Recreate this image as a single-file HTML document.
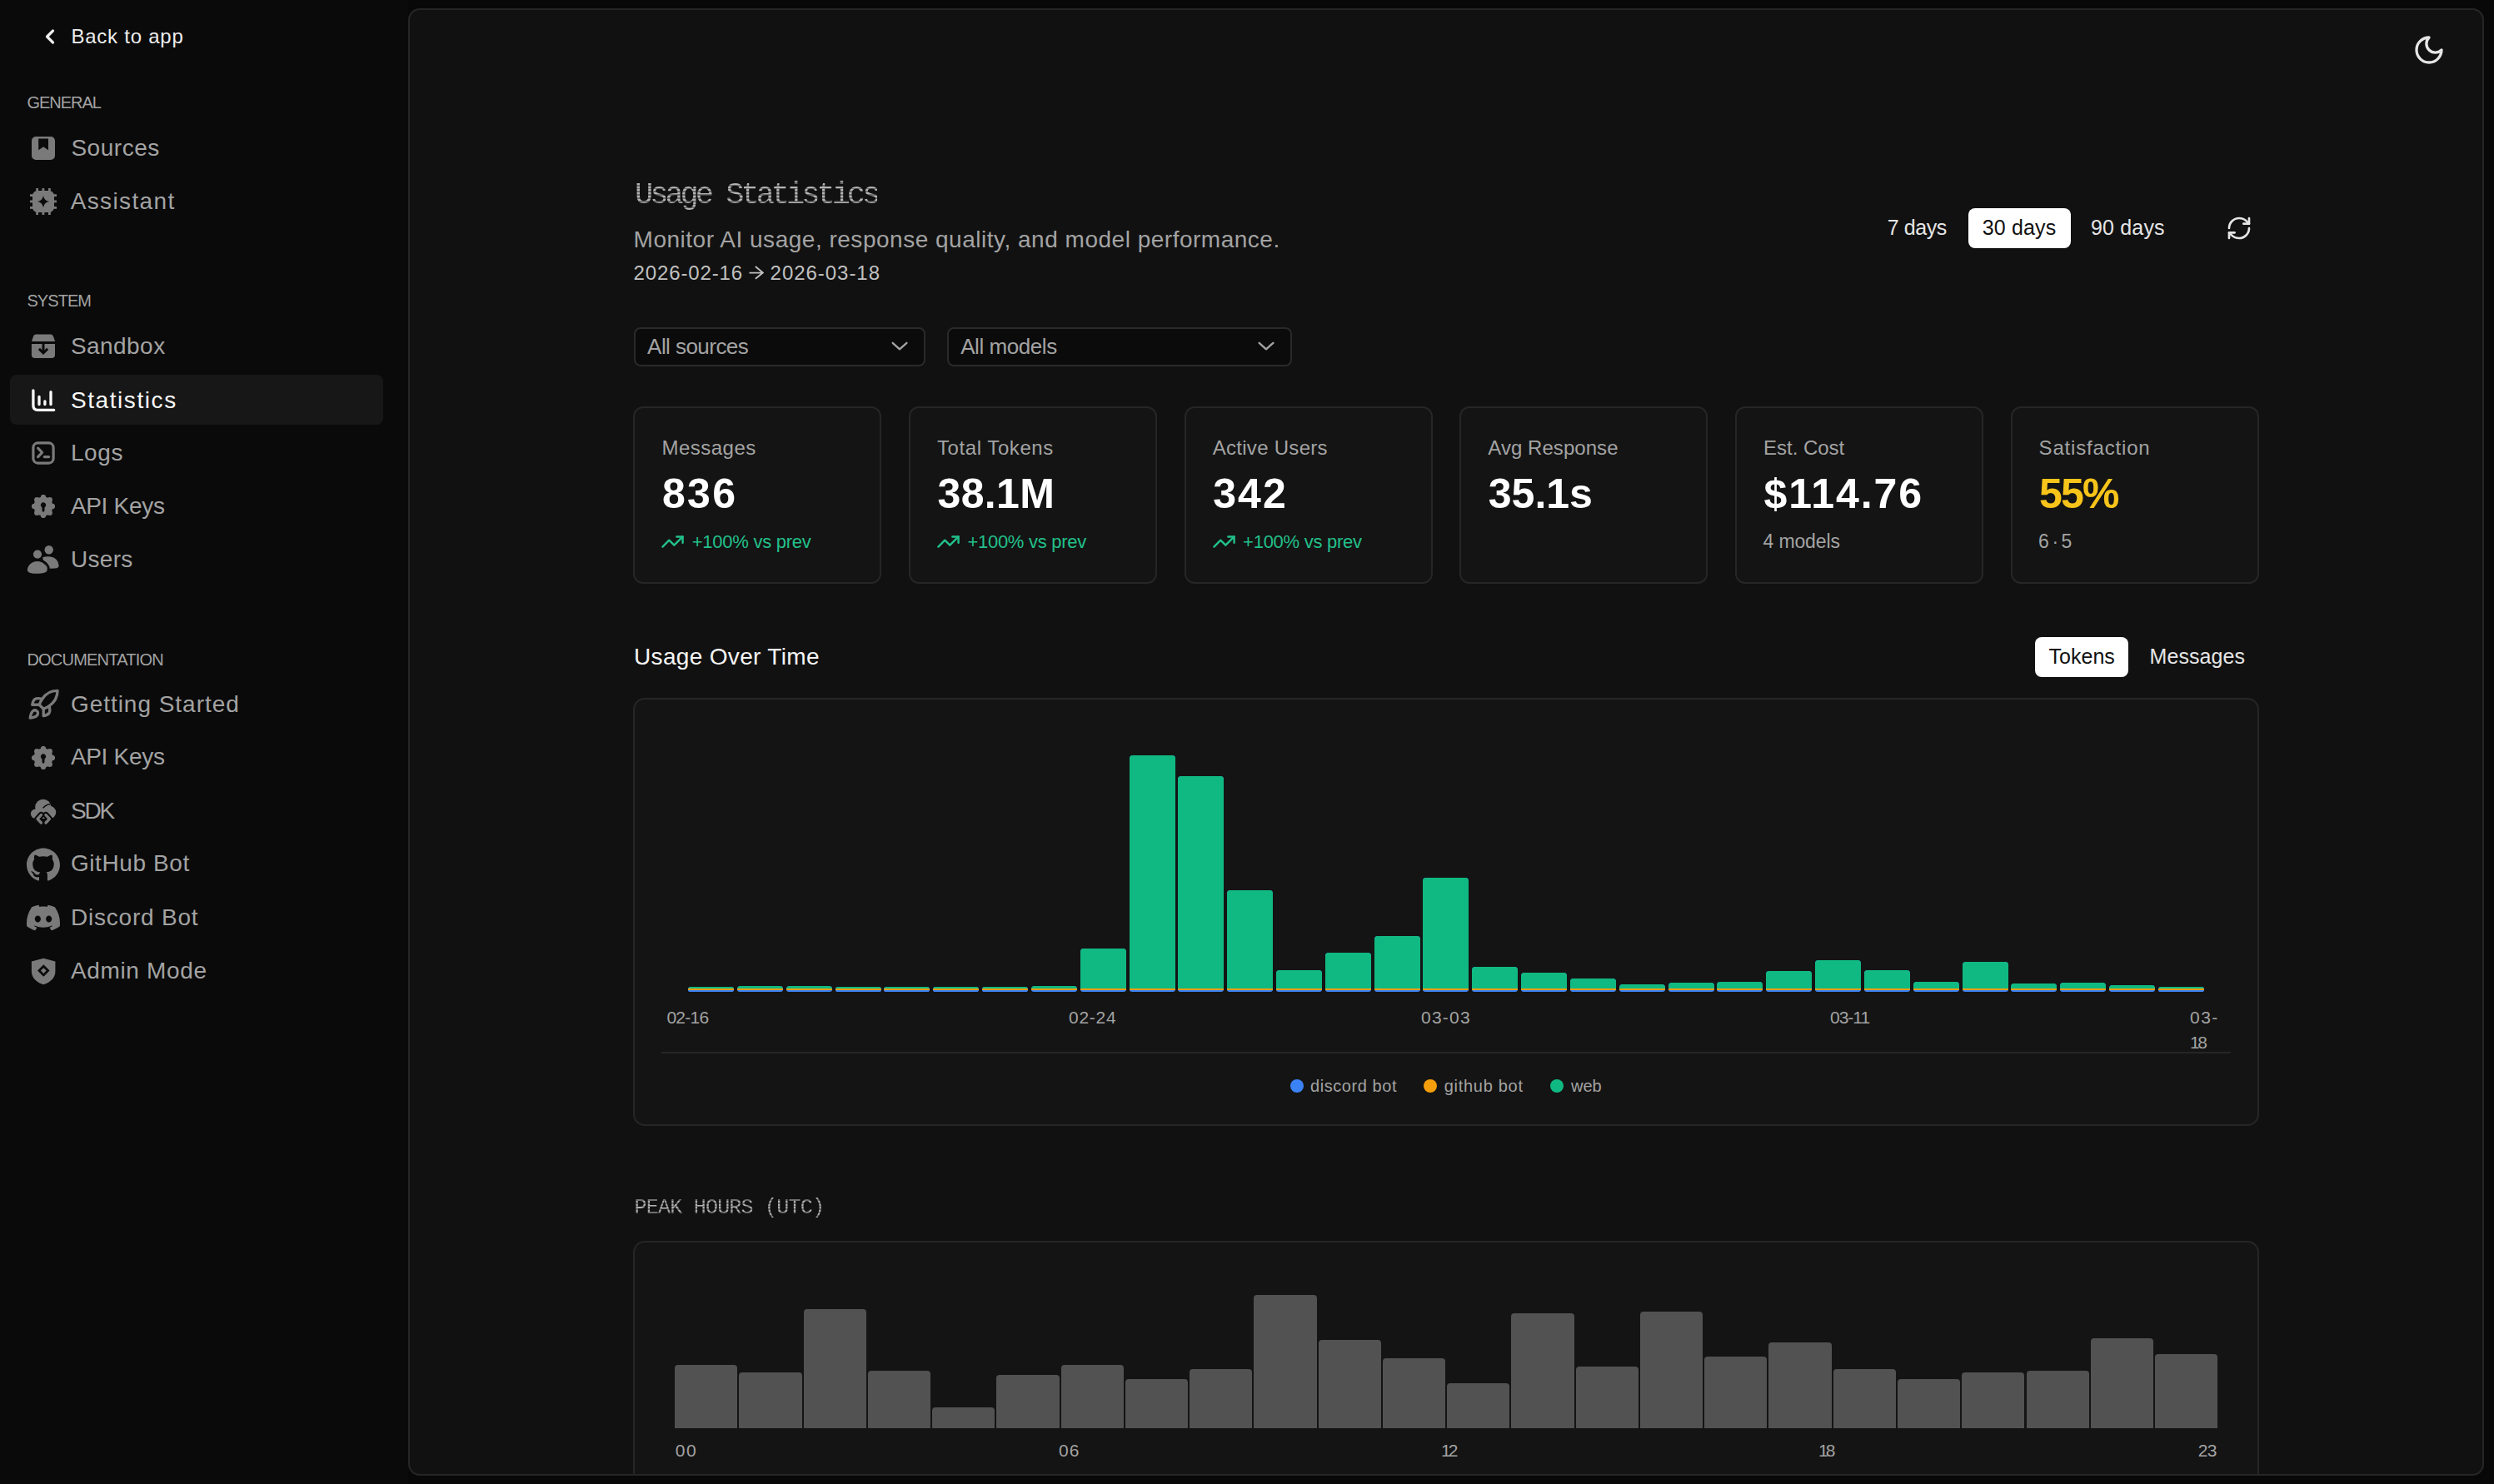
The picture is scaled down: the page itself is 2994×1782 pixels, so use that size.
<!DOCTYPE html>
<html><head><meta charset="utf-8"><title>Usage Statistics</title>
<style>
html,body{margin:0;padding:0;width:2994px;height:1782px;overflow:hidden;background:#080808;}
.t{position:absolute;white-space:nowrap;}
.r{position:absolute;}
#root{position:relative;width:2994px;height:1782px;overflow:hidden;}
@media (max-width: 1700px) { html,body{width:1497px;height:891px;} #root{transform:scale(0.5);transform-origin:0 0;} }
</style></head><body><div id="root">
<div class="r" style="left:0px;top:0px;width:490px;height:1782px;background:#0a0a0a"></div>
<svg class="r" style="left:46px;top:30px" width="28" height="28" viewBox="0 0 28 28"><path d="M17.5 21 L10.5 14 L17.5 7" fill="none" stroke="#ededed" stroke-width="3.2" stroke-linecap="round" stroke-linejoin="round"/></svg>
<div class="t" style="left:85.4px;top:32px;font-size:24px;line-height:24px;color:#ededed;font-weight:400;letter-spacing:0.76px;font-family:'Liberation Sans', sans-serif;">Back to app</div>
<div class="t" style="left:32.4px;top:113px;font-size:20px;line-height:20px;color:#a3a3a3;font-weight:400;letter-spacing:-1.00px;font-family:'Liberation Sans', sans-serif;">GENERAL</div>
<svg class="r" style="left:38px;top:164px" width="28" height="28" viewBox="0 0 28 28"><path fill-rule="evenodd" fill="#7a7a7a" d="M5 0 H23 A5 5 0 0 1 28 5 V23 A5 5 0 0 1 23 28 H5 A5 5 0 0 1 0 23 V5 A5 5 0 0 1 5 0 Z M8.2 2.5 V16.3 L14.1 12.2 L20 16.3 V2.5 Z"/></svg>
<div class="t" style="left:85.4px;top:164px;font-size:28px;line-height:28px;color:#a3a3a3;font-weight:400;letter-spacing:0.53px;font-family:'Liberation Sans', sans-serif;">Sources</div>
<svg class="r" style="left:36px;top:226px" width="32" height="32" viewBox="0 0 32 32"><rect x="7.199999999999999" y="0" width="2.8" height="4" fill="#7a7a7a"/><rect x="7.199999999999999" y="28" width="2.8" height="4" fill="#7a7a7a"/><rect x="0" y="7.199999999999999" width="4" height="2.8" fill="#7a7a7a"/><rect x="28" y="7.199999999999999" width="4" height="2.8" fill="#7a7a7a"/><rect x="14.5" y="0" width="2.8" height="4" fill="#7a7a7a"/><rect x="14.5" y="28" width="2.8" height="4" fill="#7a7a7a"/><rect x="0" y="14.5" width="4" height="2.8" fill="#7a7a7a"/><rect x="28" y="14.5" width="4" height="2.8" fill="#7a7a7a"/><rect x="22.0" y="0" width="2.8" height="4" fill="#7a7a7a"/><rect x="22.0" y="28" width="2.8" height="4" fill="#7a7a7a"/><rect x="0" y="22.0" width="4" height="2.8" fill="#7a7a7a"/><rect x="28" y="22.0" width="4" height="2.8" fill="#7a7a7a"/><path fill-rule="evenodd" fill="#7a7a7a" d="M9 3 H23 A6 6 0 0 1 29 9 V23 A6 6 0 0 1 23 29 H9 A6 6 0 0 1 3 23 V9 A6 6 0 0 1 9 3 Z M16 8.9 Q17.1 14.9 23.1 16 Q17.1 17.1 16 23.1 Q14.9 17.1 8.9 16 Q14.9 14.9 16 8.9 Z"/></svg>
<div class="t" style="left:84.7px;top:228px;font-size:28px;line-height:28px;color:#a3a3a3;font-weight:400;letter-spacing:1.36px;font-family:'Liberation Sans', sans-serif;">Assistant</div>
<div class="t" style="left:32.4px;top:351px;font-size:20px;line-height:20px;color:#a3a3a3;font-weight:400;letter-spacing:-0.92px;font-family:'Liberation Sans', sans-serif;">SYSTEM</div>
<svg class="r" style="left:37px;top:401px" width="30" height="30" viewBox="0 0 30 30"><path fill="#7a7a7a" d="M6.2 0.6 H23.8 Q26 0.6 27 3 L29.2 8.9 H1 L3 3 Q4 0.6 6.2 0.6 Z"/><path fill="#7a7a7a" d="M0.9 12 H29 V25 A4 4 0 0 1 25 29 H4.9 A4 4 0 0 1 0.9 25 Z"/><path d="M15 12 V22.5 M9.9 17.9 L15 23 L20.1 17.9" fill="none" stroke="#0a0a0a" stroke-width="2.9" stroke-linecap="butt" stroke-linejoin="miter"/></svg>
<div class="t" style="left:84.9px;top:402px;font-size:28px;line-height:28px;color:#a3a3a3;font-weight:400;letter-spacing:0.45px;font-family:'Liberation Sans', sans-serif;">Sandbox</div>
<div class="r" style="left:12px;top:450px;width:448px;height:60px;background:#171717;border-radius:8px"></div>
<svg class="r" style="left:37.8px;top:465.8px" width="29" height="29" viewBox="0 0 29 29"><g fill="none" stroke="#fafafa" stroke-width="3.3" stroke-linecap="round" stroke-linejoin="round"><path d="M1.9 2.9 V21 Q1.9 26.3 7.2 26.3 H26.7"/><path d="M9 10.5 V19.6"/><path d="M15.9 15.8 V19.6"/><path d="M23 4.7 V19.6"/></g></svg>
<div class="t" style="left:84.9px;top:466.5px;font-size:28px;line-height:28px;color:#fafafa;font-weight:400;letter-spacing:1.58px;font-family:'Liberation Sans', sans-serif;">Statistics</div>
<svg class="r" style="left:38px;top:530px" width="28" height="28" viewBox="0 0 28 28"><g fill="none" stroke="#7a7a7a" stroke-width="3.2" stroke-linecap="round" stroke-linejoin="round"><rect x="1.9" y="1.9" width="24.2" height="24.2" rx="5.5"/><path d="M7.6 8.2 L12.6 13.4 L7.6 18.6"/><path d="M15.3 18.6 H20.6"/></g></svg>
<div class="t" style="left:84.9px;top:530px;font-size:28px;line-height:28px;color:#a3a3a3;font-weight:400;letter-spacing:0.60px;font-family:'Liberation Sans', sans-serif;">Logs</div>
<svg class="r" style="left:38px;top:594px" width="28" height="28" viewBox="0 0 28 28"><g fill="#7a7a7a"><circle cx="14" cy="14" r="11.5"/><circle cx="14.00" cy="3.10" r="3.2"/><circle cx="21.71" cy="6.29" r="3.2"/><circle cx="24.90" cy="14.00" r="3.2"/><circle cx="21.71" cy="21.71" r="3.2"/><circle cx="14.00" cy="24.90" r="3.2"/><circle cx="6.29" cy="21.71" r="3.2"/><circle cx="3.10" cy="14.00" r="3.2"/><circle cx="6.29" cy="6.29" r="3.2"/></g><path fill="#0a0a0a" d="M12.4 15.3 A3.2 3.2 0 1 1 15.6 15.3 L15.4 19.3 A1.4 1.4 0 0 1 12.6 19.3 Z"/></svg>
<div class="t" style="left:84.9px;top:594px;font-size:28px;line-height:28px;color:#a3a3a3;font-weight:400;letter-spacing:-0.31px;font-family:'Liberation Sans', sans-serif;">API Keys</div>
<svg class="r" style="left:32px;top:654px" width="40" height="36" viewBox="0 0 40 36"><g fill="#7a7a7a"><circle cx="26.7" cy="6.3" r="5.2"/><circle cx="13" cy="11.6" r="5.1"/><path d="M19.5 15 Q24 13.8 29 14.5 Q37.8 16.3 38.6 25 Q38.8 28.4 34 28.6 L23.5 29 Q23 22 19.5 18 Z"/><path d="M12.8 20.1 C20 20.1 24.6 25.8 24.6 30.2 C24.6 33.6 19 34.8 12.8 34.8 C6.6 34.8 0.9 33.8 0.9 30.4 C0.9 25.8 5.6 20.1 12.8 20.1 Z"/></g><path d="M12.8 18.2 C21 18.2 26.6 24.8 26.6 30.2" fill="none" stroke="#0a0a0a" stroke-width="2.6"/></svg>
<div class="t" style="left:84.9px;top:657.5px;font-size:28px;line-height:28px;color:#a3a3a3;font-weight:400;letter-spacing:0.32px;font-family:'Liberation Sans', sans-serif;">Users</div>
<div class="t" style="left:32.4px;top:781.5px;font-size:20px;line-height:20px;color:#a3a3a3;font-weight:400;letter-spacing:-0.78px;font-family:'Liberation Sans', sans-serif;">DOCUMENTATION</div>
<svg class="r" style="left:31.8px;top:825.8px" width="40.4" height="40.4" viewBox="0 0 24 24"><g fill="none" stroke="#7a7a7a" stroke-width="2" stroke-linecap="round" stroke-linejoin="round"><path d="M4.5 16.5c-1.5 1.26-2 5-2 5s3.74-.5 5-2c.71-.84.7-2.13-.09-2.91a2.18 2.18 0 0 0-2.91-.09z"/><path d="m12 15-3-3a22 22 0 0 1 2-3.95A12.88 12.88 0 0 1 22 2c0 2.72-.78 7.5-6 11a22.350 22.35 0 0 1-4 2z"/><path d="M9 12H4s.55-3.03 2-4c1.62-1.080 5 0 5 0"/><path d="M12 15v5s3.03-.55 4-2c1.08-1.62 0-5 0-5"/></g></svg>
<div class="t" style="left:84.9px;top:831.6px;font-size:28px;line-height:28px;color:#a3a3a3;font-weight:400;letter-spacing:0.97px;font-family:'Liberation Sans', sans-serif;">Getting Started</div>
<svg class="r" style="left:38px;top:896px" width="28" height="28" viewBox="0 0 28 28"><g fill="#7a7a7a"><circle cx="14" cy="14" r="11.5"/><circle cx="14.00" cy="3.10" r="3.2"/><circle cx="21.71" cy="6.29" r="3.2"/><circle cx="24.90" cy="14.00" r="3.2"/><circle cx="21.71" cy="21.71" r="3.2"/><circle cx="14.00" cy="24.90" r="3.2"/><circle cx="6.29" cy="21.71" r="3.2"/><circle cx="3.10" cy="14.00" r="3.2"/><circle cx="6.29" cy="6.29" r="3.2"/></g><path fill="#0a0a0a" d="M12.4 15.3 A3.2 3.2 0 1 1 15.6 15.3 L15.4 19.3 A1.4 1.4 0 0 1 12.6 19.3 Z"/></svg>
<div class="t" style="left:84.9px;top:895.3px;font-size:28px;line-height:28px;color:#a3a3a3;font-weight:400;letter-spacing:-0.31px;font-family:'Liberation Sans', sans-serif;">API Keys</div>
<svg class="r" style="left:34px;top:955px" width="36" height="38" viewBox="0 0 36 38"><defs><mask id="sdkm" maskUnits="userSpaceOnUse" x="0" y="0" width="36" height="38"><rect width="36" height="38" fill="#000"/><g fill="#fff"><circle cx="8.6" cy="22.2" r="5.7"/><circle cx="17.8" cy="14.4" r="9.6"/><circle cx="25.4" cy="20.6" r="7.8"/><rect x="8.6" y="16" width="17" height="12"/></g><path d="M17.6 15.4 Q21.5 10.6 26.8 10.4" fill="none" stroke="#000" stroke-width="1.5"/><path d="M49.4 0" /><path d="M15.4 23.6 L11 28.4 L15.4 33 M21 23.6 L25.4 28.4 L21 33" fill="none" stroke="#000" stroke-width="7.4" stroke-linecap="round" stroke-linejoin="round"/></mask></defs><rect width="36" height="38" fill="#7a7a7a" mask="url(#sdkm)"/><path d="M15.4 23.6 L11 28.4 L15.4 33 M21 23.6 L25.4 28.4 L21 33" fill="none" stroke="#7a7a7a" stroke-width="3.4" stroke-linecap="round" stroke-linejoin="round"/></svg>
<div class="t" style="left:84.9px;top:959.6px;font-size:28px;line-height:28px;color:#a3a3a3;font-weight:400;letter-spacing:-2.15px;font-family:'Liberation Sans', sans-serif;">SDK</div>
<svg class="r" style="left:32px;top:1018px" width="40" height="40" viewBox="0 0 24 24"><path fill="#7a7a7a" d="M12 .297c-6.63 0-12 5.373-12 12 0 5.303 3.438 9.8 8.205 11.385.6.113.82-.258.82-.577 0-.285-.01-1.04-.015-2.04-3.338.724-4.042-1.61-4.042-1.61C4.422 18.07 3.633 17.7 3.633 17.7c-1.087-.744.084-.729.084-.729 1.205.084 1.838 1.236 1.838 1.236 1.07 1.835 2.809 1.305 3.495.998.108-.776.417-1.305.76-1.605-2.665-.3-5.466-1.332-5.466-5.930 0-1.31.465-2.38 1.235-3.22-.135-.303-.54-1.523.105-3.176 0 0 1.005-.322 3.3 1.23.96-.267 1.98-.399 3-.405 1.02.006 2.04.138 3 .405 2.28-1.552 3.285-1.23 3.285-1.23.645 1.653.24 2.873.12 3.176.765.84 1.23 1.91 1.23 3.22 0 4.61-2.805 5.625-5.475 5.92.42.36.81 1.096.81 2.22 0 1.606-.015 2.896-.015 3.286 0 .315.21.69.825.57C20.565 22.092 24 17.592 24 12.297c0-6.627-5.373-12-12-12"/></svg>
<div class="t" style="left:84.9px;top:1023px;font-size:28px;line-height:28px;color:#a3a3a3;font-weight:400;letter-spacing:0.61px;font-family:'Liberation Sans', sans-serif;">GitHub Bot</div>
<svg class="r" style="left:32px;top:1082px" width="40" height="40" viewBox="0 0 24 24"><path fill="#7a7a7a" d="M20.317 4.3698a19.7913 19.7913 0 00-4.8851-1.5152.0741.0741 0 00-.0785.0371c-.211.3753-.4447.8648-.6083 1.2495-1.8447-.2762-3.68-.2762-5.4868 0-.1636-.3933-.4058-.8742-.6177-1.2495a.077.077 0 00-.0785-.037 19.7363 19.7363 0 00-4.8852 1.515.0699.0699 0 00-.0321.0277C.5334 9.0458-.319 13.5799.0992 18.0578a.0824.0824 0 00.0312.0561c2.0528 1.5076 4.0413 2.4228 5.9929 3.0294a.0777.0777 0 00.0842-.0276c.4616-.6304.8731-1.2952 1.226-1.9942a.076.076 0 00-.0416-.1057c-.6528-.2476-1.2743-.5495-1.8722-.8923a.077.077 0 01-.0076-.1277c.1258-.0943.2517-.1923.3718-.2914a.0743.0743 0 01.0776-.0105c3.9278 1.7933 8.18 1.7933 12.0614 0a.0739.0739 0 01.0785.0095c.1202.099.246.1981.3728.2924a.077.077 0 01-.0066.1276 12.2986 12.2986 0 01-1.873.8914.0766.0766 0 00-.0407.1067c.3604.698.7719 1.3628 1.225 1.9932a.076.076 0 00.0842.0286c1.961-.6067 3.9495-1.5219 6.0023-3.0294a.077.077 0 00.0313-.0552c.5004-5.177-.8382-9.6739-3.5485-13.6604a.061.061 0 00-.0312-.0286zM8.02 15.3312c-1.1825 0-2.1569-1.0857-2.1569-2.419 0-1.3332.9555-2.4189 2.157-2.4189 1.2108 0 2.1757 1.0952 2.1568 2.419 0 1.3332-.9555 2.4189-2.1569 2.4189zm7.9748 0c-1.1825 0-2.1569-1.0857-2.1569-2.419 0-1.3332.9554-2.4189 2.1569-2.4189 1.2108 0 2.1757 1.0952 2.1568 2.419 0 1.3332-.946 2.4189-2.1568 2.4189Z"/></svg>
<div class="t" style="left:84.9px;top:1087.8px;font-size:28px;line-height:28px;color:#a3a3a3;font-weight:400;letter-spacing:0.80px;font-family:'Liberation Sans', sans-serif;">Discord Bot</div>
<svg class="r" style="left:37px;top:1150px" width="30" height="33" viewBox="0 0 30 33"><path fill-rule="evenodd" fill="#7a7a7a" d="M15.2 0.8 L29.4 4.6 V16.5 C29.4 24.5 23 30 15.2 32.2 C7.4 30 0.9 24.5 0.9 16.5 V4.6 Z M15.3 8.2 L22.6 15.5 L15.3 22.8 L8 15.5 Z M15.3 12.2 L11.9 15.5 L15.3 18.9 L18.7 15.5 Z"/></svg>
<div class="t" style="left:84.9px;top:1151.5px;font-size:28px;line-height:28px;color:#a3a3a3;font-weight:400;letter-spacing:0.67px;font-family:'Liberation Sans', sans-serif;">Admin Mode</div>
<div class="r" style="left:490px;top:10px;width:2492px;height:1762px;background:#111111;border-radius:14px"></div>
<svg class="r" style="left:2896px;top:40px" width="40" height="40" viewBox="0 0 24 24"><path d="M12 3a6 6 0 0 0 9 9 9 9 0 1 1-9-9Z" fill="none" stroke="#e5e5e5" stroke-width="2" stroke-linecap="round" stroke-linejoin="round"/></svg>
<div class="t" style="left:762.0px;top:216px;font-size:37px;line-height:37px;color:transparent;font-weight:400;letter-spacing:-4.00px;font-family:'Liberation Mono', monospace;background:repeating-linear-gradient(to bottom,#b4b4b4 0px,#b4b4b4 2px,#6e6e6e 2px,#6e6e6e 3.8px);-webkit-background-clip:text;background-clip:text;">Usage Statistics</div>
<div class="t" style="left:760.6px;top:274.3px;font-size:28px;line-height:28px;color:#a3a3a3;font-weight:400;letter-spacing:0.51px;font-family:'Liberation Sans', sans-serif;">Monitor AI usage, response quality, and model performance.</div>
<div class="t" style="left:760.6px;top:316px;font-size:24px;line-height:24px;color:#c0c0c0;font-weight:400;letter-spacing:0.86px;font-family:'Liberation Sans', sans-serif;">2026-02-16</div>
<svg class="r" style="left:896px;top:316px" width="24" height="24" viewBox="0 0 24 24"><path d="M3.5 11.6 H19.8 M10.9 4.1 L19.8 11.6 L10.9 18.8" fill="none" stroke="#c0c0c0" stroke-width="1.9" stroke-linecap="butt" stroke-linejoin="miter"/></svg>
<div class="t" style="left:924.6px;top:316px;font-size:24px;line-height:24px;color:#c0c0c0;font-weight:400;letter-spacing:0.96px;font-family:'Liberation Sans', sans-serif;">2026-03-18</div>
<div class="t" style="left:2265.7px;top:260.7px;font-size:25px;line-height:25px;color:#e5e5e5;font-weight:400;letter-spacing:-0.40px;font-family:'Liberation Sans', sans-serif;">7 days</div>
<div class="r" style="left:2363px;top:250px;width:123px;height:48px;background:#ffffff;border-radius:8px"></div>
<div class="t" style="left:2379.7px;top:260.7px;font-size:25px;line-height:25px;color:#111111;font-weight:400;letter-spacing:0.15px;font-family:'Liberation Sans', sans-serif;">30 days</div>
<div class="t" style="left:2510.0px;top:260.7px;font-size:25px;line-height:25px;color:#e5e5e5;font-weight:400;letter-spacing:0.17px;font-family:'Liberation Sans', sans-serif;">90 days</div>
<svg class="r" style="left:2672px;top:258px" width="32" height="32" viewBox="0 0 24 24"><g fill="none" stroke="#e5e5e5" stroke-width="2" stroke-linecap="round" stroke-linejoin="round"><path d="M3 12a9 9 0 0 1 9-9 9.75 9.75 0 0 1 6.74 2.74L21 8"/><path d="M21 3v5h-5"/><path d="M21 12a9 9 0 0 1-9 9 9.75 9.75 0 0 1-6.74-2.74L3 16"/><path d="M8 16H3v5"/></g></svg>
<div class="r" style="left:760.6px;top:393px;width:350.80000000000007px;height:47px;background:#0b0b0b;border:2px solid #2a2a2a;border-radius:8px;box-sizing:border-box"></div>
<div class="t" style="left:777.1px;top:403.4px;font-size:26px;line-height:26px;color:#a3a3a3;font-weight:400;letter-spacing:-0.55px;font-family:'Liberation Sans', sans-serif;">All sources</div>
<svg class="r" style="left:1068px;top:404px" width="24" height="24" viewBox="0 0 24 24"><path d="M3.7 7.8 L12 15.3 L20.4 7.8" fill="none" stroke="#a3a3a3" stroke-width="2.4" stroke-linecap="round" stroke-linejoin="round"/></svg>
<div class="r" style="left:1136.7px;top:393px;width:414.29999999999995px;height:47px;background:#0b0b0b;border:2px solid #2a2a2a;border-radius:8px;box-sizing:border-box"></div>
<div class="t" style="left:1153.2px;top:403.4px;font-size:26px;line-height:26px;color:#a3a3a3;font-weight:400;letter-spacing:-0.44px;font-family:'Liberation Sans', sans-serif;">All models</div>
<svg class="r" style="left:1507.5px;top:404px" width="24" height="24" viewBox="0 0 24 24"><path d="M3.7 7.8 L12 15.3 L20.4 7.8" fill="none" stroke="#a3a3a3" stroke-width="2.4" stroke-linecap="round" stroke-linejoin="round"/></svg>
<div class="r" style="left:760px;top:488px;width:298px;height:213px;background:#141414;border:2px solid #262626;border-radius:12px;box-sizing:border-box"></div>
<div class="t" style="left:794.4px;top:526.3px;font-size:24px;line-height:24px;color:#a3a3a3;font-weight:400;letter-spacing:0.50px;font-family:'Liberation Sans', sans-serif;">Messages</div>
<div class="t" style="left:794.9px;top:568.4px;font-size:50px;line-height:50px;color:#ffffff;font-weight:700;letter-spacing:2.40px;font-family:'Liberation Sans', sans-serif;">836</div>
<svg class="r" style="left:793px;top:636px" width="29" height="29" viewBox="0 0 24 24"><g fill="none" stroke="#22c08a" stroke-width="2" stroke-linecap="round" stroke-linejoin="round"><polyline points="22 7 13.5 15.5 8.5 10.5 2 17"/><polyline points="16 7 22 7 22 13"/></g></svg>
<div class="t" style="left:830.8px;top:640px;font-size:22px;line-height:22px;color:#22c08a;font-weight:400;letter-spacing:-0.27px;font-family:'Liberation Sans', sans-serif;">+100% vs prev</div>
<div class="r" style="left:1091px;top:488px;width:298px;height:213px;background:#141414;border:2px solid #262626;border-radius:12px;box-sizing:border-box"></div>
<div class="t" style="left:1125.0px;top:526.3px;font-size:24px;line-height:24px;color:#a3a3a3;font-weight:400;letter-spacing:0.57px;font-family:'Liberation Sans', sans-serif;">Total Tokens</div>
<div class="t" style="left:1125.5px;top:568.4px;font-size:50px;line-height:50px;color:#ffffff;font-weight:700;letter-spacing:0.35px;font-family:'Liberation Sans', sans-serif;">38.1M</div>
<svg class="r" style="left:1124px;top:636px" width="29" height="29" viewBox="0 0 24 24"><g fill="none" stroke="#22c08a" stroke-width="2" stroke-linecap="round" stroke-linejoin="round"><polyline points="22 7 13.5 15.5 8.5 10.5 2 17"/><polyline points="16 7 22 7 22 13"/></g></svg>
<div class="t" style="left:1161.4px;top:640px;font-size:22px;line-height:22px;color:#22c08a;font-weight:400;letter-spacing:-0.27px;font-family:'Liberation Sans', sans-serif;">+100% vs prev</div>
<div class="r" style="left:1422px;top:488px;width:298px;height:213px;background:#141414;border:2px solid #262626;border-radius:12px;box-sizing:border-box"></div>
<div class="t" style="left:1455.7px;top:526.3px;font-size:24px;line-height:24px;color:#a3a3a3;font-weight:400;letter-spacing:0.29px;font-family:'Liberation Sans', sans-serif;">Active Users</div>
<div class="t" style="left:1456.2px;top:568.4px;font-size:50px;line-height:50px;color:#ffffff;font-weight:700;letter-spacing:2.10px;font-family:'Liberation Sans', sans-serif;">342</div>
<svg class="r" style="left:1455px;top:636px" width="29" height="29" viewBox="0 0 24 24"><g fill="none" stroke="#22c08a" stroke-width="2" stroke-linecap="round" stroke-linejoin="round"><polyline points="22 7 13.5 15.5 8.5 10.5 2 17"/><polyline points="16 7 22 7 22 13"/></g></svg>
<div class="t" style="left:1492.1px;top:640px;font-size:22px;line-height:22px;color:#22c08a;font-weight:400;letter-spacing:-0.27px;font-family:'Liberation Sans', sans-serif;">+100% vs prev</div>
<div class="r" style="left:1752px;top:488px;width:298px;height:213px;background:#141414;border:2px solid #262626;border-radius:12px;box-sizing:border-box"></div>
<div class="t" style="left:1786.3px;top:526.3px;font-size:24px;line-height:24px;color:#a3a3a3;font-weight:400;letter-spacing:0.05px;font-family:'Liberation Sans', sans-serif;">Avg Response</div>
<div class="t" style="left:1786.8px;top:568.4px;font-size:50px;line-height:50px;color:#ffffff;font-weight:700;letter-spacing:0.00px;font-family:'Liberation Sans', sans-serif;">35.1s</div>
<div class="r" style="left:2083px;top:488px;width:298px;height:213px;background:#141414;border:2px solid #262626;border-radius:12px;box-sizing:border-box"></div>
<div class="t" style="left:2117.0px;top:526.3px;font-size:24px;line-height:24px;color:#a3a3a3;font-weight:400;letter-spacing:-0.01px;font-family:'Liberation Sans', sans-serif;">Est. Cost</div>
<div class="t" style="left:2117.5px;top:568.4px;font-size:50px;line-height:50px;color:#ffffff;font-weight:700;letter-spacing:1.92px;font-family:'Liberation Sans', sans-serif;">$114.76</div>
<div class="t" style="left:2116.5px;top:639px;font-size:23px;line-height:23px;color:#a3a3a3;font-weight:400;letter-spacing:-0.13px;font-family:'Liberation Sans', sans-serif;">4 models</div>
<div class="r" style="left:2414px;top:488px;width:298px;height:213px;background:#141414;border:2px solid #262626;border-radius:12px;box-sizing:border-box"></div>
<div class="t" style="left:2447.6px;top:526.3px;font-size:24px;line-height:24px;color:#a3a3a3;font-weight:400;letter-spacing:0.82px;font-family:'Liberation Sans', sans-serif;">Satisfaction</div>
<div class="t" style="left:2448.1px;top:568.4px;font-size:50px;line-height:50px;color:#f8c41a;font-weight:700;letter-spacing:-1.90px;font-family:'Liberation Sans', sans-serif;">55%</div>
<div class="t" style="left:2447.1px;top:639px;font-size:23px;line-height:23px;color:#a3a3a3;font-weight:400;letter-spacing:-1.43px;font-family:'Liberation Sans', sans-serif;">6 · 5</div>
<div class="t" style="left:761.0px;top:775.4px;font-size:28px;line-height:28px;color:#f5f5f5;font-weight:400;letter-spacing:0.33px;font-family:'Liberation Sans', sans-serif;">Usage Over Time</div>
<div class="r" style="left:2443px;top:765px;width:112px;height:48px;background:#ffffff;border-radius:8px"></div>
<div class="t" style="left:2459.6px;top:776px;font-size:25px;line-height:25px;color:#111111;font-weight:400;letter-spacing:0.00px;font-family:'Liberation Sans', sans-serif;">Tokens</div>
<div class="t" style="left:2580.6px;top:776px;font-size:25px;line-height:25px;color:#e5e5e5;font-weight:400;letter-spacing:0.06px;font-family:'Liberation Sans', sans-serif;">Messages</div>
<div class="r" style="left:760px;top:838px;width:1952px;height:514px;background:#141414;border:2px solid #262626;border-radius:14px;box-sizing:border-box"></div>
<div class="r" style="left:826.0px;top:1185px;width:55px;height:6px;border-radius:4px 4px 3px 3px;overflow:hidden;background:#3b82f6"><div style="height:2px;background:#10b981"></div><div style="height:2px;background:#f59e0b"></div></div><div class="r" style="left:884.8px;top:1184px;width:55px;height:7px;border-radius:4px 4px 3px 3px;overflow:hidden;background:#3b82f6"><div style="height:3px;background:#10b981"></div><div style="height:2px;background:#f59e0b"></div></div><div class="r" style="left:943.7px;top:1184px;width:55px;height:7px;border-radius:4px 4px 3px 3px;overflow:hidden;background:#3b82f6"><div style="height:3px;background:#10b981"></div><div style="height:2px;background:#f59e0b"></div></div><div class="r" style="left:1002.5px;top:1185px;width:55px;height:6px;border-radius:4px 4px 3px 3px;overflow:hidden;background:#3b82f6"><div style="height:2px;background:#10b981"></div><div style="height:2px;background:#f59e0b"></div></div><div class="r" style="left:1061.3px;top:1185px;width:55px;height:6px;border-radius:4px 4px 3px 3px;overflow:hidden;background:#3b82f6"><div style="height:2px;background:#10b981"></div><div style="height:2px;background:#f59e0b"></div></div><div class="r" style="left:1120.2px;top:1185px;width:55px;height:6px;border-radius:4px 4px 3px 3px;overflow:hidden;background:#3b82f6"><div style="height:2px;background:#10b981"></div><div style="height:2px;background:#f59e0b"></div></div><div class="r" style="left:1179.0px;top:1185px;width:55px;height:6px;border-radius:4px 4px 3px 3px;overflow:hidden;background:#3b82f6"><div style="height:2px;background:#10b981"></div><div style="height:2px;background:#f59e0b"></div></div><div class="r" style="left:1237.8px;top:1184px;width:55px;height:7px;border-radius:4px 4px 3px 3px;overflow:hidden;background:#3b82f6"><div style="height:3px;background:#10b981"></div><div style="height:2px;background:#f59e0b"></div></div><div class="r" style="left:1296.6px;top:1139px;width:55px;height:52px;border-radius:4px 4px 3px 3px;overflow:hidden;background:#3b82f6"><div style="height:48px;background:#10b981"></div><div style="height:2px;background:#f59e0b"></div></div><div class="r" style="left:1355.5px;top:907px;width:55px;height:284px;border-radius:4px 4px 3px 3px;overflow:hidden;background:#3b82f6"><div style="height:280px;background:#10b981"></div><div style="height:2px;background:#f59e0b"></div></div><div class="r" style="left:1414.3px;top:932px;width:55px;height:259px;border-radius:4px 4px 3px 3px;overflow:hidden;background:#3b82f6"><div style="height:255px;background:#10b981"></div><div style="height:2px;background:#f59e0b"></div></div><div class="r" style="left:1473.1px;top:1069px;width:55px;height:122px;border-radius:4px 4px 3px 3px;overflow:hidden;background:#3b82f6"><div style="height:118px;background:#10b981"></div><div style="height:2px;background:#f59e0b"></div></div><div class="r" style="left:1532.0px;top:1165px;width:55px;height:26px;border-radius:4px 4px 3px 3px;overflow:hidden;background:#3b82f6"><div style="height:22px;background:#10b981"></div><div style="height:2px;background:#f59e0b"></div></div><div class="r" style="left:1590.8px;top:1144px;width:55px;height:47px;border-radius:4px 4px 3px 3px;overflow:hidden;background:#3b82f6"><div style="height:43px;background:#10b981"></div><div style="height:2px;background:#f59e0b"></div></div><div class="r" style="left:1649.6px;top:1124px;width:55px;height:67px;border-radius:4px 4px 3px 3px;overflow:hidden;background:#3b82f6"><div style="height:63px;background:#10b981"></div><div style="height:2px;background:#f59e0b"></div></div><div class="r" style="left:1708.4px;top:1054px;width:55px;height:137px;border-radius:4px 4px 3px 3px;overflow:hidden;background:#3b82f6"><div style="height:133px;background:#10b981"></div><div style="height:2px;background:#f59e0b"></div></div><div class="r" style="left:1767.3px;top:1161px;width:55px;height:30px;border-radius:4px 4px 3px 3px;overflow:hidden;background:#3b82f6"><div style="height:26px;background:#10b981"></div><div style="height:2px;background:#f59e0b"></div></div><div class="r" style="left:1826.1px;top:1168px;width:55px;height:23px;border-radius:4px 4px 3px 3px;overflow:hidden;background:#3b82f6"><div style="height:19px;background:#10b981"></div><div style="height:2px;background:#f59e0b"></div></div><div class="r" style="left:1884.9px;top:1175px;width:55px;height:16px;border-radius:4px 4px 3px 3px;overflow:hidden;background:#3b82f6"><div style="height:12px;background:#10b981"></div><div style="height:2px;background:#f59e0b"></div></div><div class="r" style="left:1943.8px;top:1182px;width:55px;height:9px;border-radius:4px 4px 3px 3px;overflow:hidden;background:#3b82f6"><div style="height:5px;background:#10b981"></div><div style="height:2px;background:#f59e0b"></div></div><div class="r" style="left:2002.6px;top:1180px;width:55px;height:11px;border-radius:4px 4px 3px 3px;overflow:hidden;background:#3b82f6"><div style="height:7px;background:#10b981"></div><div style="height:2px;background:#f59e0b"></div></div><div class="r" style="left:2061.4px;top:1179px;width:55px;height:12px;border-radius:4px 4px 3px 3px;overflow:hidden;background:#3b82f6"><div style="height:8px;background:#10b981"></div><div style="height:2px;background:#f59e0b"></div></div><div class="r" style="left:2120.3px;top:1166px;width:55px;height:25px;border-radius:4px 4px 3px 3px;overflow:hidden;background:#3b82f6"><div style="height:21px;background:#10b981"></div><div style="height:2px;background:#f59e0b"></div></div><div class="r" style="left:2179.1px;top:1153px;width:55px;height:38px;border-radius:4px 4px 3px 3px;overflow:hidden;background:#3b82f6"><div style="height:34px;background:#10b981"></div><div style="height:2px;background:#f59e0b"></div></div><div class="r" style="left:2237.9px;top:1165px;width:55px;height:26px;border-radius:4px 4px 3px 3px;overflow:hidden;background:#3b82f6"><div style="height:22px;background:#10b981"></div><div style="height:2px;background:#f59e0b"></div></div><div class="r" style="left:2296.8px;top:1179px;width:55px;height:12px;border-radius:4px 4px 3px 3px;overflow:hidden;background:#3b82f6"><div style="height:8px;background:#10b981"></div><div style="height:2px;background:#f59e0b"></div></div><div class="r" style="left:2355.6px;top:1155px;width:55px;height:36px;border-radius:4px 4px 3px 3px;overflow:hidden;background:#3b82f6"><div style="height:32px;background:#10b981"></div><div style="height:2px;background:#f59e0b"></div></div><div class="r" style="left:2414.4px;top:1181px;width:55px;height:10px;border-radius:4px 4px 3px 3px;overflow:hidden;background:#3b82f6"><div style="height:6px;background:#10b981"></div><div style="height:2px;background:#f59e0b"></div></div><div class="r" style="left:2473.2px;top:1180px;width:55px;height:11px;border-radius:4px 4px 3px 3px;overflow:hidden;background:#3b82f6"><div style="height:7px;background:#10b981"></div><div style="height:2px;background:#f59e0b"></div></div><div class="r" style="left:2532.1px;top:1183px;width:55px;height:8px;border-radius:4px 4px 3px 3px;overflow:hidden;background:#3b82f6"><div style="height:4px;background:#10b981"></div><div style="height:2px;background:#f59e0b"></div></div><div class="r" style="left:2590.9px;top:1185px;width:55px;height:6px;border-radius:4px 4px 3px 3px;overflow:hidden;background:#3b82f6"><div style="height:2px;background:#10b981"></div><div style="height:2px;background:#f59e0b"></div></div>
<div class="t" style="left:800.4px;top:1211.3px;font-size:21px;line-height:21px;color:#a3a3a3;font-weight:400;letter-spacing:-0.75px;font-family:'Liberation Sans', sans-serif;">02-16</div>
<div class="t" style="left:1283.0px;top:1211.3px;font-size:21px;line-height:21px;color:#a3a3a3;font-weight:400;letter-spacing:0.75px;font-family:'Liberation Sans', sans-serif;">02-24</div>
<div class="t" style="left:1706.0px;top:1211.3px;font-size:21px;line-height:21px;color:#a3a3a3;font-weight:400;letter-spacing:1.25px;font-family:'Liberation Sans', sans-serif;">03-03</div>
<div class="t" style="left:2197.0px;top:1211.3px;font-size:21px;line-height:21px;color:#a3a3a3;font-weight:400;letter-spacing:-1.00px;font-family:'Liberation Sans', sans-serif;">03-11</div>
<div class="t" style="left:2629.0px;top:1211.3px;font-size:21px;line-height:21px;color:#a3a3a3;font-weight:400;letter-spacing:1.50px;font-family:'Liberation Sans', sans-serif;">03-</div>
<div class="t" style="left:2629.0px;top:1241.3px;font-size:21px;line-height:21px;color:#a3a3a3;font-weight:400;letter-spacing:-2.50px;font-family:'Liberation Sans', sans-serif;">18</div>
<div class="r" style="left:794px;top:1263px;width:1884px;height:2px;background:#262626"></div>
<div class="r" style="left:1549px;top:1296px;width:16px;height:16px;border-radius:50%;background:#3b82f6"></div>
<div class="t" style="left:1573.0px;top:1294px;font-size:20px;line-height:20px;color:#a3a3a3;font-weight:400;letter-spacing:0.57px;font-family:'Liberation Sans', sans-serif;">discord bot</div>
<div class="r" style="left:1709px;top:1296px;width:16px;height:16px;border-radius:50%;background:#f59e0b"></div>
<div class="t" style="left:1733.7px;top:1294px;font-size:20px;line-height:20px;color:#a3a3a3;font-weight:400;letter-spacing:0.72px;font-family:'Liberation Sans', sans-serif;">github bot</div>
<div class="r" style="left:1861px;top:1296px;width:16px;height:16px;border-radius:50%;background:#10b981"></div>
<div class="t" style="left:1886.0px;top:1294px;font-size:20px;line-height:20px;color:#a3a3a3;font-weight:400;letter-spacing:0.00px;font-family:'Liberation Sans', sans-serif;">web</div>
<div class="t" style="left:761.5px;top:1438px;font-size:25px;line-height:25px;color:transparent;font-weight:400;letter-spacing:-0.77px;font-family:'Liberation Mono', monospace;background:repeating-linear-gradient(to bottom,#b0b0b0 0px,#b0b0b0 2px,#707070 2px,#707070 3.8px);-webkit-background-clip:text;background-clip:text;">PEAK HOURS (UTC)</div>
<div class="r" style="left:760px;top:1490px;width:1952px;height:281px;background:#141414;border:2px solid #262626;border-bottom:none;border-radius:14px 14px 0 0;box-sizing:border-box"></div>
<div class="r" style="left:810.0px;top:1639px;width:75.3px;height:76px;border-radius:4px 4px 0 0;background:#525252"></div><div class="r" style="left:887.3px;top:1648px;width:75.3px;height:67px;border-radius:4px 4px 0 0;background:#525252"></div><div class="r" style="left:964.5px;top:1572px;width:75.3px;height:143px;border-radius:4px 4px 0 0;background:#525252"></div><div class="r" style="left:1041.8px;top:1646px;width:75.3px;height:69px;border-radius:4px 4px 0 0;background:#525252"></div><div class="r" style="left:1119.0px;top:1690px;width:75.3px;height:25px;border-radius:4px 4px 0 0;background:#525252"></div><div class="r" style="left:1196.3px;top:1651px;width:75.3px;height:64px;border-radius:4px 4px 0 0;background:#525252"></div><div class="r" style="left:1273.6px;top:1639px;width:75.3px;height:76px;border-radius:4px 4px 0 0;background:#525252"></div><div class="r" style="left:1350.8px;top:1656px;width:75.3px;height:59px;border-radius:4px 4px 0 0;background:#525252"></div><div class="r" style="left:1428.1px;top:1644px;width:75.3px;height:71px;border-radius:4px 4px 0 0;background:#525252"></div><div class="r" style="left:1505.3px;top:1555px;width:75.3px;height:160px;border-radius:4px 4px 0 0;background:#525252"></div><div class="r" style="left:1582.6px;top:1609px;width:75.3px;height:106px;border-radius:4px 4px 0 0;background:#525252"></div><div class="r" style="left:1659.9px;top:1631px;width:75.3px;height:84px;border-radius:4px 4px 0 0;background:#525252"></div><div class="r" style="left:1737.1px;top:1661px;width:75.3px;height:54px;border-radius:4px 4px 0 0;background:#525252"></div><div class="r" style="left:1814.4px;top:1577px;width:75.3px;height:138px;border-radius:4px 4px 0 0;background:#525252"></div><div class="r" style="left:1891.6px;top:1641px;width:75.3px;height:74px;border-radius:4px 4px 0 0;background:#525252"></div><div class="r" style="left:1968.9px;top:1575px;width:75.3px;height:140px;border-radius:4px 4px 0 0;background:#525252"></div><div class="r" style="left:2046.2px;top:1629px;width:75.3px;height:86px;border-radius:4px 4px 0 0;background:#525252"></div><div class="r" style="left:2123.4px;top:1612px;width:75.3px;height:103px;border-radius:4px 4px 0 0;background:#525252"></div><div class="r" style="left:2200.7px;top:1644px;width:75.3px;height:71px;border-radius:4px 4px 0 0;background:#525252"></div><div class="r" style="left:2277.9px;top:1656px;width:75.3px;height:59px;border-radius:4px 4px 0 0;background:#525252"></div><div class="r" style="left:2355.2px;top:1648px;width:75.3px;height:67px;border-radius:4px 4px 0 0;background:#525252"></div><div class="r" style="left:2432.5px;top:1646px;width:75.3px;height:69px;border-radius:4px 4px 0 0;background:#525252"></div><div class="r" style="left:2509.7px;top:1607px;width:75.3px;height:108px;border-radius:4px 4px 0 0;background:#525252"></div><div class="r" style="left:2587.0px;top:1626px;width:75.3px;height:89px;border-radius:4px 4px 0 0;background:#525252"></div>
<div class="t" style="left:810.7px;top:1731px;font-size:21px;line-height:21px;color:#a3a3a3;font-weight:400;letter-spacing:1.70px;font-family:'Liberation Sans', sans-serif;">00</div>
<div class="t" style="left:1271.0px;top:1731px;font-size:21px;line-height:21px;color:#a3a3a3;font-weight:400;letter-spacing:1.00px;font-family:'Liberation Sans', sans-serif;">06</div>
<div class="t" style="left:1730.0px;top:1731px;font-size:21px;line-height:21px;color:#a3a3a3;font-weight:400;letter-spacing:-3.00px;font-family:'Liberation Sans', sans-serif;">12</div>
<div class="t" style="left:2183.0px;top:1731px;font-size:21px;line-height:21px;color:#a3a3a3;font-weight:400;letter-spacing:-3.00px;font-family:'Liberation Sans', sans-serif;">18</div>
<div class="t" style="left:2638.8px;top:1731px;font-size:21px;line-height:21px;color:#a3a3a3;font-weight:400;letter-spacing:-0.80px;font-family:'Liberation Sans', sans-serif;">23</div>
<div class="r" style="left:490px;top:10px;width:2492px;height:1762px;border:2px solid #262626;border-radius:14px;box-sizing:border-box"></div>
</div></body></html>
